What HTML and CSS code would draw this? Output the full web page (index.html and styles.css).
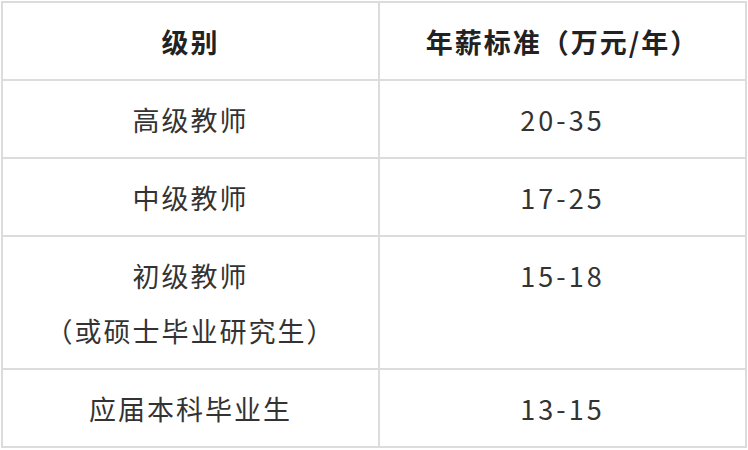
FILE: index.html
```html
<!DOCTYPE html>
<html lang="zh-CN">
<head>
<meta charset="utf-8">
<link rel="stylesheet" href="styles.css">
</head>
<body>
<table class="salary">
  <colgroup>
    <col class="col-level">
    <col class="col-pay">
  </colgroup>
  <thead>
    <tr>
      <th>级别</th>
      <th>年薪标准（万元/年）</th>
    </tr>
  </thead>
  <tbody>
    <tr>
      <td>高级教师</td>
      <td class="num">20-35</td>
    </tr>
    <tr>
      <td>中级教师</td>
      <td class="num">17-25</td>
    </tr>
    <tr class="tall">
      <td>初级教师<br>（或硕士毕业研究生）</td>
      <td class="num">15-18</td>
    </tr>
    <tr>
      <td>应届本科毕业生</td>
      <td class="num">13-15</td>
    </tr>
  </tbody>
</table>
</body>
</html>
```

FILE: styles.css
```css
html, body {
  margin: 0;
  padding: 0;
  background: #ffffff;
}

body {
  padding: 1px 0 0 1px;
  font-family: "Noto Sans CJK SC", "Noto Sans", sans-serif;
  color: #333333;
}

.salary {
  width: 746px;
  border-collapse: separate;
  border-spacing: 0;
  border-top: 2px solid #dcdcdc;
  border-left: 2px solid #dcdcdc;
  table-layout: fixed;
}

.col-level {
  width: 377px;
}

.col-pay {
  width: 367px;
}

.salary th,
.salary td {
  border-right: 2px solid #dcdcdc;
  border-bottom: 2px solid #dcdcdc;
  padding: 11px 0 10px;
  text-align: center;
  vertical-align: top;
  font-size: 27px;
  line-height: 55px;
  letter-spacing: 2px;
}

.salary th {
  font-weight: 700;
  color: #222222;
}

.salary td {
  font-weight: 400;
}

.salary td.num {
  letter-spacing: 3px;
}
```
